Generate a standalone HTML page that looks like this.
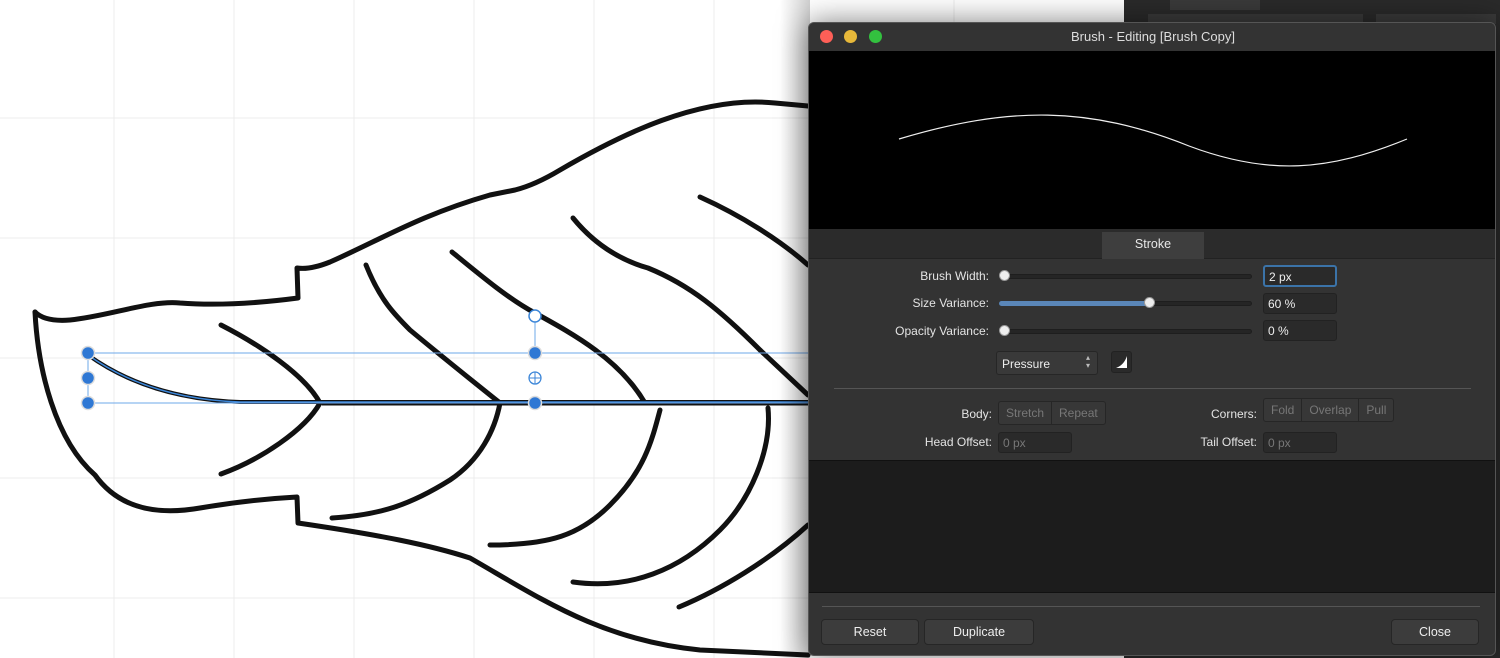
<!DOCTYPE html>
<html><head><meta charset="utf-8"><style>
*{margin:0;padding:0;box-sizing:border-box}
body{width:1500px;height:658px;overflow:hidden;position:relative;background:#fff;font-family:"Liberation Sans",Helvetica,sans-serif;font-size:12px;color:#ddd}
.abs{position:absolute}
.dlg{left:808px;top:22px;width:688px;height:634px;background:#333;border:1px solid #555;border-radius:6px;overflow:hidden;box-shadow:0 0 30px rgba(0,0,0,.5)}
.lbl{position:absolute;text-align:right;font-size:12px;color:#e4e4e4}
.field{position:absolute;background:#2a2a2a;border:1px solid #222;border-radius:3px;height:21px;padding:3px 4px;font-size:12px;color:#eee}
.btn{position:absolute;background:#3c3c3c;border:1px solid #262626;border-radius:4px;height:26px;text-align:center;line-height:24px;font-size:12.5px;color:#eee}
.seg{position:absolute;height:24px;border:1px solid #262626;background:#373737;border-radius:3px;display:flex;color:#777;font-size:12px}
.seg span{padding:0 7px;line-height:22px;border-right:1px solid #262626}
.seg span:last-child{border-right:none}
.track{position:absolute;height:5px;background:#252525;border-radius:3px;border:1px solid #1e1e1e}
.knob{position:absolute;width:11px;height:11px;border-radius:50%;background:#eee;border:1px solid #999}
</style></head><body>
<svg class="abs" style="left:0;top:0" width="1500" height="658">
<g stroke="#ececec" stroke-width="1">
<line x1="114" y1="0" x2="114" y2="658"/><line x1="234" y1="0" x2="234" y2="658"/><line x1="354" y1="0" x2="354" y2="658"/><line x1="474" y1="0" x2="474" y2="658"/><line x1="594" y1="0" x2="594" y2="658"/><line x1="714" y1="0" x2="714" y2="658"/><line x1="954" y1="0" x2="954" y2="22"/>
<line x1="0" y1="118" x2="808" y2="118"/><line x1="0" y1="238" x2="808" y2="238"/><line x1="0" y1="358" x2="808" y2="358"/><line x1="0" y1="478" x2="808" y2="478"/><line x1="0" y1="598" x2="808" y2="598"/>
</g>
<rect x="1124" y="0" width="376" height="658" fill="#2a2a2a"/>
<rect x="1170" y="0" width="90" height="10" fill="#3a3a3a"/>
<rect x="1148" y="14" width="215" height="10" fill="#3a3a3a"/>
<rect x="1376" y="14" width="120" height="10" fill="#3a3a3a"/>
<g fill="none" stroke="#111" stroke-width="5" stroke-linecap="round" stroke-linejoin="round">
<path d="M35,312 Q45,322 70,320 C110,316 150,300 180,303 C220,306 260,303 298,298 L297,268 Q310,270 330,262 C380,240 420,215 490,195 L515,190 Q535,185 560,170 C620,135 700,95 775,103 L808,106"/>
<path d="M35,312 C38,370 55,440 95,475 C120,510 160,515 200,508 C230,503 260,499 297,497 L298,523 C380,535 430,545 470,558 C540,598 600,640 700,650 L808,655"/>
<path d="M221,325 C260,345 305,375 320,403 C305,430 260,460 221,474"/>
<path d="M366,265 C380,300 395,315 410,330 C440,355 490,395 500,403 C495,430 480,460 450,480 C410,505 380,515 332,518"/>
<path d="M452,252 C480,275 510,300 535,313 C575,335 620,360 645,403"/>
<path d="M573,218 C595,245 620,260 648,268 C690,285 720,310 760,350 L808,395"/>
<path d="M660,410 C652,440 645,470 610,505 C580,535 550,545 490,545"/>
<path d="M700,197 C740,215 780,240 808,265"/>
<path d="M768,408 C772,450 750,500 720,530 C680,570 630,590 573,582"/>
<path d="M808,525 C770,560 720,590 679,607"/>
</g>
<path d="M322,403 H808" stroke="#111" stroke-width="5"/>
<path d="M88,355 C130,385 180,400 240,402 H808" stroke="#111" stroke-width="4" fill="none"/>
<path d="M88,355 C130,385 180,400 240,402 H808" stroke="#3c86d8" stroke-width="1.5" fill="none"/>
<g stroke="#6ea8ea" stroke-width="1" fill="none">
<line x1="88" y1="353" x2="808" y2="353"/><line x1="88" y1="403" x2="808" y2="403"/><line x1="88" y1="353" x2="88" y2="403"/><line x1="535" y1="316" x2="535" y2="353"/>
<circle cx="535" cy="316" r="6" fill="#fff" stroke="#3c86d8" stroke-width="1.5"/>
<circle cx="535" cy="378" r="6" stroke="#3c86d8" stroke-width="1.3"/><line x1="529" y1="378" x2="541" y2="378" stroke="#3c86d8"/><line x1="535" y1="372" x2="535" y2="384" stroke="#3c86d8"/>
</g>
<g fill="#2f78d4" stroke="#ddd" stroke-width="1.5">
<circle cx="88" cy="353" r="6.5"/><circle cx="88" cy="378" r="6.5"/><circle cx="88" cy="403" r="6.5"/><circle cx="535" cy="353" r="6.5"/><circle cx="535" cy="403" r="6.5"/>
</g>
</svg>
<div class="abs" style="left:780px;top:0;width:30px;height:658px;background:linear-gradient(90deg,rgba(0,0,0,0),rgba(0,0,0,.18))"></div>
<div class="abs dlg">
 <div class="abs" style="left:0;top:0;width:688px;height:28px;background:#333"></div>
 <div class="abs" style="left:11px;top:7px;width:13px;height:13px;border-radius:50%;background:#fe5f57"></div>
 <div class="abs" style="left:35px;top:7px;width:13px;height:13px;border-radius:50%;background:#e7b83a"></div>
 <div class="abs" style="left:60px;top:7px;width:13px;height:13px;border-radius:50%;background:#33c13f"></div>
 <div class="abs" style="left:0;top:6px;width:688px;text-align:center;font-size:13px;color:#ddd">Brush - Editing [Brush Copy]</div>
 <div class="abs" style="left:0;top:28px;width:688px;height:178px;background:#000">
  <svg width="688" height="178"><path d="M90,88 C200,55 280,55 380,95 C460,125 520,120 598,88" stroke="#eee" stroke-width="1.2" fill="none"/></svg>
 </div>
 <div class="abs" style="left:0;top:206px;width:688px;height:30px;background:#2b2b2b;border-bottom:1px solid #222"></div>
 <div class="abs" style="left:293px;top:209px;width:102px;height:27px;background:#3e3e3e;text-align:center;line-height:25px;font-size:12.5px;color:#e8e8e8">Stroke</div>
 <div class="lbl" style="left:40px;width:140px;top:246px">Brush Width:</div>
 <div class="lbl" style="left:40px;width:140px;top:273px">Size Variance:</div>
 <div class="lbl" style="left:40px;width:140px;top:301px">Opacity Variance:</div>
 <div class="track" style="left:190px;top:251px;width:253px"></div>
 <div class="track" style="left:190px;top:278px;width:253px"></div>
 <div class="abs" style="left:190px;top:278px;width:150px;height:5px;background:#5a86b8;border-radius:3px"></div>
 <div class="track" style="left:190px;top:306px;width:253px"></div>
 <div class="knob" style="left:190px;top:247px"></div>
 <div class="knob" style="left:335px;top:274px"></div>
 <div class="knob" style="left:190px;top:302px"></div>
 <div class="field" style="left:454px;top:242px;width:74px;border:2px solid #3b73a8;height:22px">2 px</div>
 <div class="field" style="left:454px;top:270px;width:74px">60 %</div>
 <div class="field" style="left:454px;top:297px;width:74px">0 %</div>
 <div class="abs" style="left:187px;top:328px;width:102px;height:24px;background:#393939;border:1px solid #262626;border-radius:3px;padding:5px 5px;font-size:12px;color:#eee">Pressure<span style="position:absolute;right:7px;top:2px;font-size:8px;line-height:8px;color:#bbb">▴<br>▾</span></div>
 <div class="abs" style="left:302px;top:328px;width:21px;height:22px;background:#2a2a2a;border:1px solid #222;border-radius:3px"><svg width="19" height="20"><path d="M4,16 L15,16 L15,4 Q12,13 4,16Z" fill="#fff"/></svg></div>
 <div class="abs" style="left:25px;top:365px;width:637px;height:1px;background:#555"></div>
 <div class="lbl" style="left:90px;width:93px;top:384px">Body:</div>
 <div class="seg" style="left:189px;top:378px"><span>Stretch</span><span>Repeat</span></div>
 <div class="lbl" style="left:340px;width:108px;top:384px">Corners:</div>
 <div class="seg" style="left:454px;top:375px"><span>Fold</span><span>Overlap</span><span>Pull</span></div>
 <div class="lbl" style="left:60px;width:123px;top:412px">Head Offset:</div>
 <div class="field" style="left:189px;top:409px;width:74px;color:#777">0 px</div>
 <div class="lbl" style="left:340px;width:108px;top:412px">Tail Offset:</div>
 <div class="field" style="left:454px;top:409px;width:74px;color:#777">0 px</div>
 <div class="abs" style="left:0;top:437px;width:688px;height:133px;background:#1c1c1c;border-top:1px solid #111;border-bottom:1px solid #111"></div>
 <div class="abs" style="left:13px;top:583px;width:658px;height:1px;background:#555"></div>
 <div class="btn" style="left:12px;top:596px;width:98px">Reset</div>
 <div class="btn" style="left:115px;top:596px;width:110px">Duplicate</div>
 <div class="btn" style="left:582px;top:596px;width:88px">Close</div>
</div>
</body></html>
